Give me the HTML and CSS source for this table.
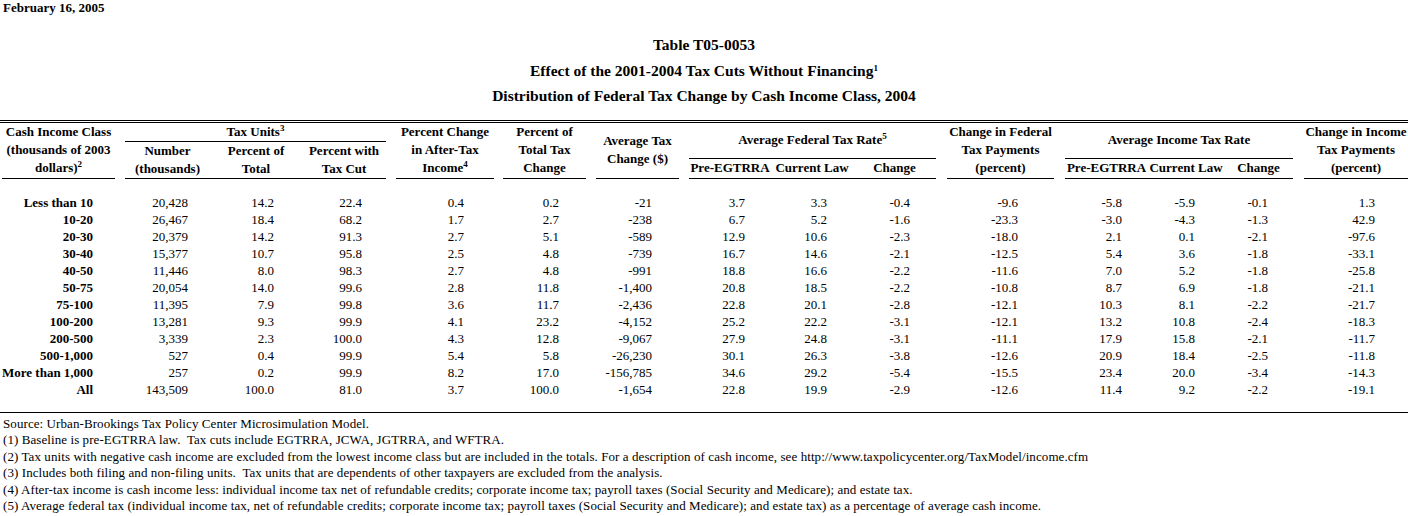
FILE: index.html
```html
<!DOCTYPE html>
<html>
<head>
<meta charset="utf-8">
<title>Table T05-0053</title>
<link rel="stylesheet" href="styles.css">
</head>
<body>
<div class="date">February 16, 2005</div>
<div class="titles">
  <div>Table T05-0053</div>
  <div>Effect of the 2001-2004 Tax Cuts Without Financing<span class="sup">1</span></div>
  <div>Distribution of Federal Tax Change by Cash Income Class, 2004</div>
</div>
<table class="dist">
  <colgroup>
    <col style="width:2px"><col style="width:113px"><col style="width:10px">
    <col style="width:85px"><col style="width:92px"><col style="width:84px">
    <col style="width:10px"><col style="width:98px"><col style="width:9px">
    <col style="width:83px"><col style="width:10px"><col style="width:83px">
    <col style="width:10px"><col style="width:82px"><col style="width:82px">
    <col style="width:83px"><col style="width:11px"><col style="width:107px">
    <col style="width:11px"><col style="width:83px"><col style="width:76px">
    <col style="width:69px"><col style="width:11px"><col style="width:104px">
  </colgroup>
  <thead>
    <tr class="h1">
      <th rowspan="3"></th>
      <th rowspan="3" class="ul">Cash Income Class<br>(thousands of 2003<br>dollars)<span class="sup">2</span></th>
      <th rowspan="3"></th>
      <th colspan="3" class="ul">Tax Units<span class="sup">3</span></th>
      <th rowspan="3"></th>
      <th rowspan="3" class="ul">Percent Change<br>in After-Tax<br>Income<span class="sup">4</span></th>
      <th rowspan="3"></th>
      <th rowspan="3" class="ul">Percent of<br>Total Tax<br>Change</th>
      <th rowspan="3"></th>
      <th rowspan="3" class="ul">Average Tax<br>Change ($)</th>
      <th rowspan="3"></th>
      <th colspan="3" rowspan="2" class="ul grp">Average Federal Tax Rate<span class="sup">5</span></th>
      <th rowspan="3"></th>
      <th rowspan="3" class="ul">Change in Federal<br>Tax Payments<br>(percent)</th>
      <th rowspan="3"></th>
      <th colspan="3" rowspan="2" class="ul grp">Average Income Tax Rate</th>
      <th rowspan="3"></th>
      <th rowspan="3" class="ul">Change in Income<br>Tax Payments<br>(percent)</th>
    </tr>
    <tr class="h2">
      <th rowspan="2" class="ul">Number<br>(thousands)</th>
      <th rowspan="2" class="ul">Percent of<br>Total</th>
      <th rowspan="2" class="ul">Percent with<br>Tax Cut</th>
    </tr>
    <tr class="h3">
      <th class="ul">Pre-EGTRRA</th>
      <th class="ul">Current Law</th>
      <th class="ul">Change</th>
      <th class="ul">Pre-EGTRRA</th>
      <th class="ul">Current Law</th>
      <th class="ul">Change</th>
    </tr>
  </thead>
  <tbody>
    <tr class="gap-top"><td colspan="24"></td></tr>
    <tr><td></td><td class="lbl">Less than 10</td><td></td><td>20,428</td><td>14.2</td><td>22.4</td><td></td><td>0.4</td><td></td><td>0.2</td><td></td><td>-21</td><td></td><td>3.7</td><td>3.3</td><td>-0.4</td><td></td><td>-9.6</td><td></td><td>-5.8</td><td>-5.9</td><td>-0.1</td><td></td><td>1.3</td></tr>
    <tr><td></td><td class="lbl">10-20</td><td></td><td>26,467</td><td>18.4</td><td>68.2</td><td></td><td>1.7</td><td></td><td>2.7</td><td></td><td>-238</td><td></td><td>6.7</td><td>5.2</td><td>-1.6</td><td></td><td>-23.3</td><td></td><td>-3.0</td><td>-4.3</td><td>-1.3</td><td></td><td>42.9</td></tr>
    <tr><td></td><td class="lbl">20-30</td><td></td><td>20,379</td><td>14.2</td><td>91.3</td><td></td><td>2.7</td><td></td><td>5.1</td><td></td><td>-589</td><td></td><td>12.9</td><td>10.6</td><td>-2.3</td><td></td><td>-18.0</td><td></td><td>2.1</td><td>0.1</td><td>-2.1</td><td></td><td>-97.6</td></tr>
    <tr><td></td><td class="lbl">30-40</td><td></td><td>15,377</td><td>10.7</td><td>95.8</td><td></td><td>2.5</td><td></td><td>4.8</td><td></td><td>-739</td><td></td><td>16.7</td><td>14.6</td><td>-2.1</td><td></td><td>-12.5</td><td></td><td>5.4</td><td>3.6</td><td>-1.8</td><td></td><td>-33.1</td></tr>
    <tr><td></td><td class="lbl">40-50</td><td></td><td>11,446</td><td>8.0</td><td>98.3</td><td></td><td>2.7</td><td></td><td>4.8</td><td></td><td>-991</td><td></td><td>18.8</td><td>16.6</td><td>-2.2</td><td></td><td>-11.6</td><td></td><td>7.0</td><td>5.2</td><td>-1.8</td><td></td><td>-25.8</td></tr>
    <tr><td></td><td class="lbl">50-75</td><td></td><td>20,054</td><td>14.0</td><td>99.6</td><td></td><td>2.8</td><td></td><td>11.8</td><td></td><td>-1,400</td><td></td><td>20.8</td><td>18.5</td><td>-2.2</td><td></td><td>-10.8</td><td></td><td>8.7</td><td>6.9</td><td>-1.8</td><td></td><td>-21.1</td></tr>
    <tr><td></td><td class="lbl">75-100</td><td></td><td>11,395</td><td>7.9</td><td>99.8</td><td></td><td>3.6</td><td></td><td>11.7</td><td></td><td>-2,436</td><td></td><td>22.8</td><td>20.1</td><td>-2.8</td><td></td><td>-12.1</td><td></td><td>10.3</td><td>8.1</td><td>-2.2</td><td></td><td>-21.7</td></tr>
    <tr><td></td><td class="lbl">100-200</td><td></td><td>13,281</td><td>9.3</td><td>99.9</td><td></td><td>4.1</td><td></td><td>23.2</td><td></td><td>-4,152</td><td></td><td>25.2</td><td>22.2</td><td>-3.1</td><td></td><td>-12.1</td><td></td><td>13.2</td><td>10.8</td><td>-2.4</td><td></td><td>-18.3</td></tr>
    <tr><td></td><td class="lbl">200-500</td><td></td><td>3,339</td><td>2.3</td><td>100.0</td><td></td><td>4.3</td><td></td><td>12.8</td><td></td><td>-9,067</td><td></td><td>27.9</td><td>24.8</td><td>-3.1</td><td></td><td>-11.1</td><td></td><td>17.9</td><td>15.8</td><td>-2.1</td><td></td><td>-11.7</td></tr>
    <tr><td></td><td class="lbl">500-1,000</td><td></td><td>527</td><td>0.4</td><td>99.9</td><td></td><td>5.4</td><td></td><td>5.8</td><td></td><td>-26,230</td><td></td><td>30.1</td><td>26.3</td><td>-3.8</td><td></td><td>-12.6</td><td></td><td>20.9</td><td>18.4</td><td>-2.5</td><td></td><td>-11.8</td></tr>
    <tr><td></td><td class="lbl">More than 1,000</td><td></td><td>257</td><td>0.2</td><td>99.9</td><td></td><td>8.2</td><td></td><td>17.0</td><td></td><td>-156,785</td><td></td><td>34.6</td><td>29.2</td><td>-5.4</td><td></td><td>-15.5</td><td></td><td>23.4</td><td>20.0</td><td>-3.4</td><td></td><td>-14.3</td></tr>
    <tr><td></td><td class="lbl">All</td><td></td><td>143,509</td><td>100.0</td><td>81.0</td><td></td><td>3.7</td><td></td><td>100.0</td><td></td><td>-1,654</td><td></td><td>22.8</td><td>19.9</td><td>-2.9</td><td></td><td>-12.6</td><td></td><td>11.4</td><td>9.2</td><td>-2.2</td><td></td><td>-19.1</td></tr>
    <tr class="gap-bottom"><td colspan="24"></td></tr>
  </tbody>
</table>
<div class="notes">
  <div>Source: Urban-Brookings Tax Policy Center Microsimulation Model.</div>
  <div>(1) Baseline is pre-EGTRRA law.&nbsp; Tax cuts include EGTRRA, JCWA, JGTRRA, and WFTRA.</div>
  <div>(2) Tax units with negative cash income are excluded from the lowest income class but are included in the totals. For a description of cash income, see http://www.taxpolicycenter.org/TaxModel/income.cfm</div>
  <div>(3) Includes both filing and non-filing units.&nbsp; Tax units that are dependents of other taxpayers are excluded from the analysis.</div>
  <div>(4) After-tax income is cash income less: individual income tax net of refundable credits; corporate income tax; payroll taxes (Social Security and Medicare); and estate tax.</div>
  <div>(5) Average federal tax (individual income tax, net of refundable credits; corporate income tax; payroll taxes (Social Security and Medicare); and estate tax) as a percentage of average cash income.</div>
</div>
</body>
</html>
```

FILE: styles.css
```css
html, body {
  margin: 0;
  padding: 0;
  background: #fff;
  color: #000;
  font-family: "Liberation Serif", "Times New Roman", serif;
}

.date {
  font-size: 13px;
  font-weight: bold;
  line-height: 16px;
  padding-left: 3px;
}

.titles {
  margin-top: 16px;
  text-align: center;
  font-size: 15.5px;
  font-weight: bold;
  line-height: 25.5px;
}

.sup {
  font-size: 9px;
  font-weight: bold;
  line-height: 0;
  vertical-align: 5px;
}

.dist {
  margin-top: 11px;
  width: 1408px;
  table-layout: fixed;
  border-collapse: separate;
  border-spacing: 0;
  border-top: 3px double #000;
  border-bottom: 1px solid #000;
  font-size: 13px;
}

.dist th {
  padding: 0;
  font-weight: bold;
  text-align: center;
  vertical-align: middle;
  line-height: 18px;
  white-space: nowrap;
}

.dist th.ul {
  border-bottom: 1px solid #000;
}

.dist .h1 { height: 19px; }
.dist .h2 { height: 17px; }
.dist .h3 { height: 18px; }

.dist td {
  padding: 0;
  height: 17px;
  line-height: 17px;
  text-align: right;
  vertical-align: middle;
  white-space: nowrap;
}

.dist td.lbl {
  font-weight: bold;
}

.dist .gap-top td { height: 15px; }
.dist .gap-bottom td { height: 14px; }

.dist tbody td:nth-child(2)  { padding-right: 22px; }
.dist tbody td:nth-child(4)  { padding-right: 22px; }
.dist tbody td:nth-child(5)  { padding-right: 28px; }
.dist tbody td:nth-child(6)  { padding-right: 24px; }
.dist tbody td:nth-child(8)  { padding-right: 30px; }
.dist tbody td:nth-child(10) { padding-right: 27px; }
.dist tbody td:nth-child(12) { padding-right: 27px; }
.dist tbody td:nth-child(14) { padding-right: 26px; }
.dist tbody td:nth-child(15) { padding-right: 26px; }
.dist tbody td:nth-child(16) { padding-right: 26px; }
.dist tbody td:nth-child(18) { padding-right: 36px; }
.dist tbody td:nth-child(20) { padding-right: 26px; }
.dist tbody td:nth-child(21) { padding-right: 29px; }
.dist tbody td:nth-child(22) { padding-right: 25px; }
.dist tbody td:nth-child(24) { padding-right: 33px; }

.notes {
  margin-top: 3px;
  padding-left: 3px;
  font-size: 13px;
  line-height: 16.6px;
  letter-spacing: 0.08px;
  white-space: nowrap;
}
```
